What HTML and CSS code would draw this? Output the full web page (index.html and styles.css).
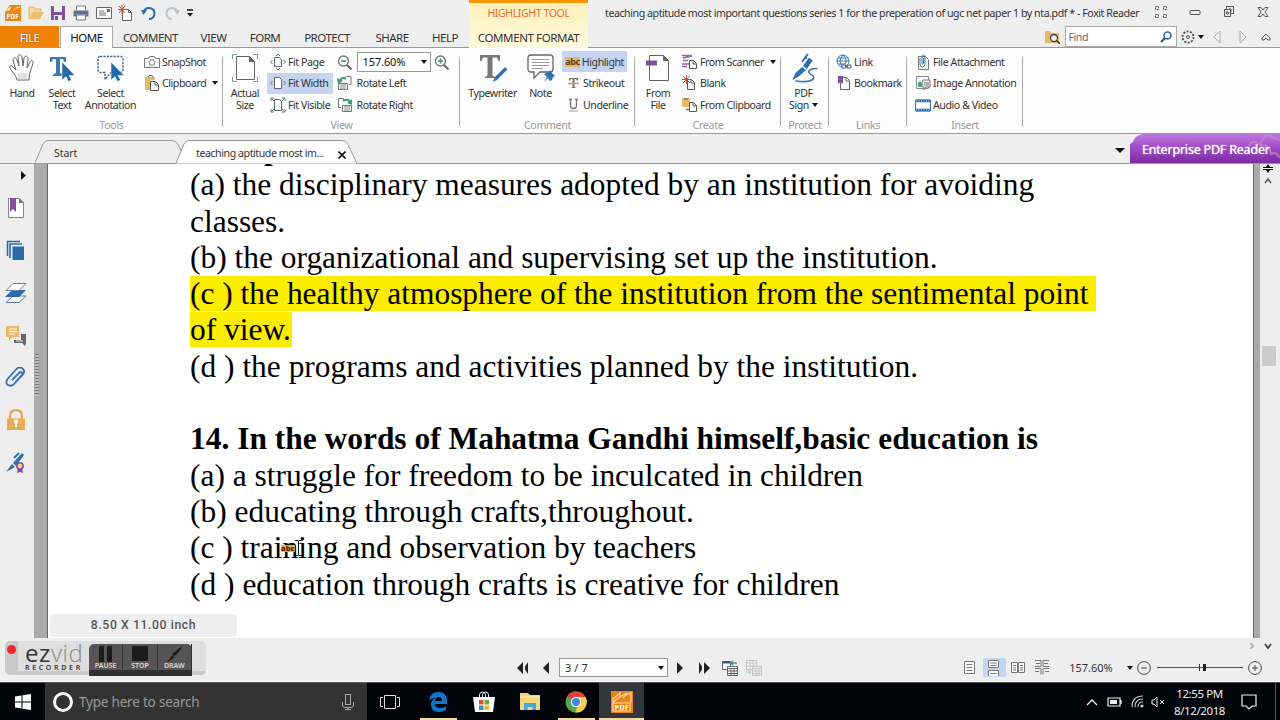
FILE: index.html
```
<!DOCTYPE html>
<html lang="en">
<head>
    <meta charset="UTF-8">
    <title>Foxit Reader</title>
    <link rel="stylesheet" href="styles.css">
</head>
<body>
<div class="screen">
    <header class="header">
        <div class="header-left">
            <div class="quick-bar">
                <svg width="16" height="16" viewBox="0 0 16 16"><path d="M5 0h11v16H0V7z" fill="#ef8413"/><path d="M1 6l5-5-1 4z" fill="#fff"/><path d="M8 6q2-4 7-4" stroke="#ffd9a8" fill="none"/><text x="1.500" y="13.500" font-size="6.500" class="logo-text">PDF</text></svg>
                <svg width="16" height="16" viewBox="0 0 16 16"><path d="M1 14V2h5l1 2h6v3" fill="#f3d5a0" stroke="#e5b566"/><path d="M1 14l4-7h11l-4 7z" fill="#edbd6d"/></svg>
                <svg width="16" height="16" viewBox="0 0 16 16"><path d="M1 1h14v14H1z" fill="#80509c"/><path d="M4 1h8v6H4zM4 10h8v5H4z" fill="#eee"/><path d="M5 11h3v4H5z" fill="#80509c"/></svg>
                <svg width="16" height="16" viewBox="0 0 16 16"><path d="M3.500 5V1h9v4M3.500 10v5h9v-5z" fill="#fff" stroke="#777"/><path d="M.5 5.500h15v6h-3v-2h-9v2h-3z" fill="#6c737b"/><path d="M3 8h10" stroke="#3c76b5" stroke-width="2"/></svg>
                <svg width="16" height="16" viewBox="0 0 16 16"><path d="M.5 2.500h15v11H.5z" fill="#fff" stroke="#666"/><path d="M3 6h5M3 8h7M3 10h7" stroke="#777"/><path d="M11 4h3v3h-3z" fill="#666"/></svg>
                <svg width="16" height="16" viewBox="0 0 16 16"><path d="M4.500 4.500h6l3 3v8h-9z" fill="#fff" stroke="#666"/><path d="M10.500 4.500v3h3" fill="none" stroke="#666"/><path d="M4 0v9M0 4.500h8M1 1l6 7M7 1L1 8" stroke="#d2482f"/></svg>
                <svg width="16" height="16" viewBox="0 0 16 16"><path d="M3 6a5.500 5.500 0 1 1 5 8" fill="none" stroke="#2d6eb0" stroke-width="2"/><path d="M0 5h6L2.500 10z" fill="#2d6eb0"/></svg>
                <svg width="16" height="16" viewBox="0 0 16 16"><path d="M13 6a5.500 5.500 0 1 0-5 8" fill="none" stroke="#b8c5d2" stroke-width="2"/><path d="M16 5h-6l3.500 5z" fill="#b8c5d2"/></svg>
                <svg width="6" height="8" viewBox="0 0 6 8"><path d="M0 1h6" stroke="#111" stroke-width="1.500"/><path d="M0 4h6L3 7.500z" fill="#111"/></svg>
            </div>
            <nav class="menu">
                <span class="file">FILE</span><span class="home">HOME</span><span class="m-comment">COMMENT</span><span class="m-view">VIEW</span><span class="m-form">FORM</span><span class="m-protect">PROTECT</span><span class="m-share">SHARE</span><span class="m-help">HELP</span>
            </nav>
        </div>
        <div class="context-tab">
            <span class="context-name">HIGHLIGHT TOOL</span>
            <span class="context-menu">COMMENT FORMAT</span>
        </div>
        <div class="header-right">
            <div class="title-row">
                <span class="doc-title">teaching aptitude most important questions series 1 for the preperation of ugc net paper 1 by nta.pdf * - Foxit Reader</span>
                <div class="window-buttons">
                    <svg width="14" height="14" viewBox="0 0 14 14" fill="none" stroke="#555"><path d="M1.500 1.500h3v3h-3zM9.500 1.500h3v3h-3zM1.500 9.500h3v3h-3zM9.500 9.500h3v3h-3z" stroke-dasharray="2 1"/></svg>
                    <svg width="14" height="14" viewBox="0 0 14 14" fill="none" stroke="#555"><rect x="2" y="5.500" width="10" height="4" rx="1"/></svg>
                    <svg width="14" height="14" viewBox="0 0 14 14" fill="none" stroke="#555"><path d="M4.500 4V1.500h7v7H9"/><path d="M2.500 4.500h6v7h-6zM4.500 7h2v2h-2zM7 4h2v3"/></svg>
                    <svg width="14" height="14" viewBox="0 0 14 14" fill="none" stroke="#555"><path d="M2 2.500h3l2 2.500 2-2.500h3L9 7l3 4.500H9L7 9l-2 2.500H2L5 7z"/></svg>
                </div>
            </div>
            <div class="find-row">
                <svg width="15" height="14" viewBox="0 0 15 14"><path d="M0 1h5l1 2h8v10H0z" fill="#e8b767"/><circle cx="9" cy="8" r="3.500" fill="#eee" stroke="#444" stroke-width="1.300"/><path d="M11.500 10.500L15 14" stroke="#444" stroke-width="1.600"/></svg>
                <div class="find-box"><span>Find</span><svg width="12" height="12" viewBox="0 0 12 12"><circle cx="7.500" cy="4.500" r="3.500" fill="#fff" stroke="#2a66b4" stroke-width="1.600"/><path d="M5 7L1 11" stroke="#2a5288" stroke-width="2.200"/></svg></div>
                <svg class="gear" width="14" height="14" viewBox="0 0 14 14" fill="none" stroke="#555"><circle cx="7" cy="7" r="5.500" stroke-width="2" stroke-dasharray="2 1.400"/><circle cx="7" cy="7" r="4" stroke="#eee"/><circle cx="7" cy="7" r="1.500"/></svg>
                <i class="caret"></i>
                <svg class="prev" width="8" height="14" viewBox="0 0 8 14"><path d="M7 1v12L1 7z" fill="#f6f6f6" stroke="#aaa"/></svg>
                <svg class="next" width="8" height="14" viewBox="0 0 8 14"><path d="M1 1v12l6-6z" fill="#f6f6f6" stroke="#aaa"/></svg>
                <svg class="collapse" width="10" height="8" viewBox="0 0 10 8"><path d="M1 5l4-4 4 4v2H7L5 5 3 7H1z" fill="none" stroke="#555"/></svg>
            </div>
        </div>
    </header>

    <section class="ribbon">
        <div class="group g-tools">
            <div class="tools">
                <div class="big hand">
                    <svg width="26" height="28" viewBox="0 0 26 28"><path d="M8 26C7 21 3 18 1 14c-1-2 1-3 3-1l3 3L4 6c0-3 3-3 4 0l2 6-1-9c0-3 3-3 4 0l1 9 1-8c1-3 4-2 4 1l-1 9 3-6c1-3 4-1 3 1-2 7-4 10-4 17z" fill="#fff" stroke="#666"/><path d="M8.500 19h10v6.500h-10z" fill="#ccc" opacity=".6"/></svg>
                    <span>Hand</span>
                </div>
                <div class="big select-text">
                    <svg width="26" height="28" viewBox="0 0 26 28"><path d="M1 3h16v5h-1.500L14 5h-3v14l3 1.500V22H4v-1.500L7 19V5H4L2.500 8H1z" fill="#387db8"/><path d="M13 8v18l4-3.500 2.500 5 3-1.500-2.500-4.500h6z" fill="#2568a8" stroke="#fff" stroke-width=".5"/></svg>
                    <span>Select<br>Text</span>
                </div>
                <div class="big select-anno">
                    <svg width="28" height="28" viewBox="0 0 28 28"><path d="M3 2.500h20q3 0 3 3v10q0 3-3 3H14l-6 7v-7H4q-3 0-3-3v-10q0-3 2-3z" fill="none" stroke="#48658a" stroke-width="1.400" stroke-dasharray="2.200 1.200"/><path d="M14 8v18l4-3.500 2.500 5 3-1.500-2.500-4.500h6z" fill="#2568a8" stroke="#fff" stroke-width=".5"/></svg>
                    <span>Select<br>Annotation</span>
                </div>
                <div class="rows snap">
                    <div><svg width="16" height="16" viewBox="0 0 16 16" fill="none" stroke="#777"><path d="M.5 4.500h4l1-2h5l1 2h4v9H.5z"/><circle cx="8" cy="8.500" r="2.800"/></svg>SnapShot</div>
                    <div><svg width="16" height="16" viewBox="0 0 16 16"><path d="M1 2h10v3H7v10H1z" fill="#e9b76a"/><path d="M4 2.500l1-2h3l1 2" stroke="#666" fill="none"/><path d="M6.500 6.500h5l3 3v6h-8zM11 7v3h3" fill="#fff" stroke="#555"/></svg>Clipboard<i class="caret"></i></div>
                </div>
            </div>
            <p>Tools</p>
        </div>
        <div class="group g-view">
            <div class="tools">
                <div class="big actual">
                    <svg width="28" height="30" viewBox="0 0 28 30"><path d="M5.500 3.500h13l5 5v18h-18z" fill="#fff" stroke="#666"/><path d="M18 3v6h6z" fill="#666"/><path d="M1.500 6V1.500H6M22 1.500h4.500V6M1.500 24v4.500H6M22 28.500h4.500V24" fill="none" stroke="#7c9a90"/></svg>
                    <span>Actual<br>Size</span>
                </div>
                <div class="rows fit">
                    <div><svg width="16" height="16" viewBox="0 0 16 16"><path d="M4.500 3.500h5l2 2v7h-7z" fill="#fff" stroke="#666"/><path d="M6 2l2-2 2 2M6 14l2 2 2-2M2.500 6l-2 2 2 2M13.500 6l2 2-2 2" fill="none" stroke="#4b8d73"/></svg>Fit Page</div>
                    <div class="on"><svg width="16" height="16" viewBox="0 0 16 16"><path d="M4.500 2.500h5l2 2v9h-7z" fill="#fff" stroke="#666"/><path d="M2.500 6l-2 2 2 2M13.500 6l2 2-2 2" fill="none" stroke="#4b8d73"/></svg>Fit Width</div>
                    <div><svg width="16" height="16" viewBox="0 0 16 16"><path d="M4.500 2.500h5l2 2v9h-7z" fill="#fff" stroke="#666"/><path d="M1 4V1h3M12 1h3v3M1 12v3h3M12 15h3v-3M1 1l3 3M15 1l-3 3M1 15l3-3M15 15l-3-3" fill="none" stroke="#4b8d73"/></svg>Fit Visible</div>
                </div>
                <div class="rows zoomcol">
                    <div><svg width="16" height="16" viewBox="0 0 16 16" fill="none"><circle cx="6.500" cy="7" r="5" stroke="#777" stroke-width="1.400"/><path d="M10 11l4.500 4.500" stroke="#666" stroke-width="2"/><path d="M4 7h5" stroke="#3a8d6e" stroke-width="1.500"/></svg><span class="zoom-box">157.60%<i class="caret"></i></span><svg width="16" height="16" viewBox="0 0 16 16" fill="none"><circle cx="6.500" cy="7" r="5" stroke="#777" stroke-width="1.400"/><path d="M10 11l4.500 4.500" stroke="#666" stroke-width="2"/><path d="M4 7h5M6.500 4.500v5" stroke="#3a8d6e" stroke-width="1.500"/></svg></div>
                    <div><svg width="16" height="16" viewBox="0 0 16 16" fill="none" stroke="#777"><path d="M9 1.500h5v8h-2M1.500 8.500h9v6h-9z"/><path d="M4 9v5M6 9v5M8 9v5" stroke="#888"/><path d="M9 4Q5 1 3 6" stroke="#3a9a76" stroke-width="2"/><path d="M0 3l1 6 5-3z" fill="#3a9a76" stroke="none"/></svg>Rotate Left</div>
                    <div><svg width="16" height="16" viewBox="0 0 16 16" fill="none" stroke="#777"><path d="M4 10.500H1.500v-9h5v2M5.500 8.500h9v6h-9z"/><path d="M8 9v5M10 9v5M12 9v5" stroke="#888"/><path d="M6 4q5-3 7 1" stroke="#3a9a76" stroke-width="2"/><path d="M15 2l0 6-5-2z" fill="#3a9a76" stroke="none"/></svg>Rotate Right</div>
                </div>
            </div>
            <p>View</p>
        </div>
        <div class="group g-comment">
            <div class="tools">
                <div class="big typewriter">
                    <svg width="30" height="30" viewBox="0 0 30 30"><path d="M2 2h20v6h-1.500L19 4.500h-4.500v18L17 24v1H7v-1l2.500-1.500v-18H5L3.500 8H2z" fill="#777"/><path d="M27 14l2.500 2.500L19 27l-4.500 2L17 24z" fill="#3572b0"/></svg>
                    <span>Typewriter</span>
                </div>
                <div class="big note">
                    <svg width="30" height="30" viewBox="0 0 30 30"><path d="M5 2h19q3 0 3 3v11q0 3-3 3H14l-6 6v-6H5q-3 0-3-3V5q0-3 3-3z" fill="#fff" stroke="#666" stroke-width="1.300"/><path d="M6 6.500h17M6 9.500h17M6 12.500h17M6 15.500h11" stroke="#999"/><path d="M23 17l6 6-2 1-1 3-2 1-2-3-4 4 3-5-3-3 2-1 3-1z" fill="#2f6faf"/></svg>
                    <span>Note</span>
                </div>
                <div class="rows marks">
                    <div class="on"><b class="abc">abc</b>Highlight</div>
                    <div><svg width="16" height="16" viewBox="0 0 16 16"><path d="M4 3h9v2.500h-1L11 4H9.500v8l1.500 1H6l1.500-1V4H6L5 5.500H4z" fill="#777"/><path d="M3 8.500h11" stroke="#d99748" stroke-width="1.500"/></svg>Strikeout</div>
                    <div><svg width="16" height="16" viewBox="0 0 16 16" fill="none" stroke="#777"><path d="M4 2.500h3M10 2.500h3M5.500 3v5.500q0 3 3 3t3-3V3" stroke-width="1.300"/><path d="M4 14h9" stroke="#b49575"/></svg>Underline</div>
                </div>
            </div>
            <p>Comment</p>
        </div>
        <div class="group g-create">
            <div class="tools">
                <div class="big from-file">
                    <svg width="26" height="30" viewBox="0 0 26 30"><path d="M4.500 2.500h14l5 5v20h-19z" fill="#fff" stroke="#666"/><path d="M18 2v6h6z" fill="#666"/><path d="M1 7.500h11v5H1z" fill="#80509c"/></svg>
                    <span>From<br>File</span>
                </div>
                <div class="rows sources">
                    <div><svg width="16" height="16" viewBox="0 0 16 16"><path d="M0 1.500h10M1 4l9-2M1 6.500h5M0 10h8M0 12.500h5" stroke="#8e67a5" stroke-width="1.300"/><path d="M7.500 6.500h4l3 3v5h-7zM11 7v3h3" fill="#fff" stroke="#555"/></svg>From Scanner<i class="caret"></i></div>
                    <div><svg width="16" height="16" viewBox="0 0 16 16"><path d="M5.500 4.500h4l3 3v7h-7zM9 5v3h3" fill="#fff" stroke="#555"/><path d="M4.500 0v9M0 4.500h9M1 1l7 7M8 1L1 8" stroke="#d2482f"/></svg>Blank</div>
                    <div><svg width="16" height="16" viewBox="0 0 16 16"><path d="M0 1h8v9H0z" fill="#e9b76a"/><path d="M2 2h4M4 12.500h4" stroke="#777" stroke-width="1.300"/><path d="M7.500 5.500h4l3 3v6h-7zM11 6v3h3" fill="#fff" stroke="#555"/></svg>From Clipboard</div>
                </div>
            </div>
            <p>Create</p>
        </div>
        <div class="group g-protect">
            <div class="tools">
                <div class="big sign">
                    <svg width="30" height="31" viewBox="0 0 30 31"><path d="M20 5l4 2.500-6 9-4-3zM13 14.500l4 3L10 24l-7 4 3-7z" fill="#2e6eae"/><path d="M13 9l6-8M17 5l1 1" stroke="#2e6eae" stroke-width="2"/><path d="M29 16q-10 0-9 4c1 3 6 2 5 6q-2 5-19 3" fill="none" stroke="#3d78b2" stroke-width="1.600"/></svg>
                    <span>PDF<br>Sign<i class="caret"></i></span>
                </div>
            </div>
            <p>Protect</p>
        </div>
        <div class="group g-links">
            <div class="tools">
                <div class="rows">
                    <div><svg width="16" height="16" viewBox="0 0 16 16" fill="none" stroke="#3d7ab5"><circle cx="7" cy="7" r="6"/><path d="M1 7h12M2 4h10M2 10h8M7 1q-6 6 0 12M7 1q5 5 2 9"/><path d="M6 11h4v3H6zM11 11h4v3h-4zM9 12.500h3" stroke="#42628a" fill="#fff"/></svg>Link</div>
                    <div><svg width="16" height="16" viewBox="0 0 16 16"><path d="M4.500 2.500h6l3 3v9h-9zM10 3v3h3" fill="#fff" stroke="#666"/><path d="M2 1h5v8L4.500 7 2 9z" fill="#80509c"/></svg>Bookmark</div>
                </div>
            </div>
            <p>Links</p>
        </div>
        <div class="group g-insert">
            <div class="tools">
                <div class="rows">
                    <div><svg width="16" height="16" viewBox="0 0 16 16" fill="none"><path d="M3.500 2.500h7l3 3v10h-10z" stroke="#777" fill="#fff"/><path d="M5 4v6q0 3 2.500 3T10 10V3q0-2-1.500-2T7 3v6q0 1 .7 1T8.500 9V4" stroke="#3a78b5"/></svg>File Attachment</div>
                    <div><svg width="16" height="16" viewBox="0 0 16 16" fill="none"><path d="M1.500 1.500h12v12h-12z" stroke="#888"/><path d="M3 12V8l2-2 2 3v3z" fill="#49a37f"/><path d="M8 5h7v7h-4l-2 3v-3H7V7z" fill="#eee" stroke="#777"/><path d="M9 8h5M9 10h5" stroke="#777"/></svg>Image Annotation</div>
                    <div><svg width="16" height="16" viewBox="0 0 16 16"><path d="M.5 3h15v11H.5z" fill="#fff" stroke="#2d6eaf"/><path d="M1 4h14M1 13h14" stroke="#1e61a6" stroke-width="2.400"/><path d="M1 4h14M1 13h14" stroke="#fff" stroke-dasharray="1 1.500"/></svg>Audio &amp; Video</div>
                </div>
            </div>
            <p>Insert</p>
        </div>
    </section>

    <div class="tab-strip">
        <div class="doc-tab start-tab">
            <svg width="148" height="23" viewBox="0 0 148 23"><path d="M0 22.500L8 4q2-3.500 5-3.500h124q4 0 6 4l5 10" fill="#eee" stroke="#999"/></svg>
            <span>Start</span>
        </div>
        <div class="doc-tab open-tab">
            <svg width="182" height="24" viewBox="0 0 182 24"><path d="M0 23.500L8 4q2-3.500 5-3.500h153q4 0 6 4l9 19" fill="#fff" stroke="#999"/></svg>
            <span>teaching aptitude most im...</span>
            <svg class="close" width="8" height="8" viewBox="0 0 8 8"><path d="M.5.5l7 7M7.500.5l-7 7" stroke="#111" stroke-width="1.600"/></svg>
        </div>
        <i class="caret tab-caret"></i>
        <div class="banner">
            <svg width="150" height="29" viewBox="0 0 150 29"><path d="M0 0h13Q5 1 3 8L0 10z" fill="#f4eef8"/><path d="M118 13q5-9 12-2 4-12 12-8l8 3M130 12q9-3 11 8 5-3 9 4" fill="none" stroke="#c98ac4" stroke-width="2.500" opacity=".6"/></svg>
            <span>Enterprise PDF Reader</span>
        </div>
    </div>

    <main class="workspace">
        <aside class="sidebar">
            <svg class="expand" width="5" height="9" viewBox="0 0 5 9"><path d="M0 0l5 4.500L0 9z" fill="#111"/></svg>
            <svg width="22" height="22" viewBox="0 0 22 22"><path d="M3.500 1.500h11l4 4v15h-15z" fill="#fff" stroke="#888"/><path d="M14 1v5h5z" fill="#777"/><path d="M5 1h6v14l-3-3-3 3z" fill="#80509c"/></svg>
            <svg width="22" height="22" viewBox="0 0 22 22"><path d="M2.500 16V1.500H15M5 18V4h12" fill="none" stroke="#2b69ab" stroke-width="1.600"/><path d="M7.500 6.500H19V20H7.500z" fill="#2b69ab"/></svg>
            <svg width="22" height="22" viewBox="0 0 22 22"><path d="M8 14h13l-7 6.500H1z" fill="#fff" stroke="#6282a3"/><path d="M7 8h14l-7 7H0z" fill="#2b69ab"/><path d="M8 1.500h13l-7 7H1z" fill="#fff" stroke="#6282a3"/></svg>
            <svg width="22" height="22" viewBox="0 0 22 22"><path d="M1 1h13v11H8l-4 4v-4H1z" fill="#e8b767"/><path d="M4 4h8M4 6.500h8M4 9h6" stroke="#fff"/><path d="M16 9h5v9l-1 3-3-3H9v-3h7z" fill="#666"/><path d="M11 16h7" stroke="#eee"/></svg>
            <svg width="22" height="22" viewBox="0 0 22 22"><path d="M7 13l7-7q2-2 3 0t-1 3l-7 8q-3 3-6 1t-.5-6l9-10q3-3 6-.5t.5 6L10 16" fill="none" stroke="#3673b1" stroke-width="1.800"/></svg>
            <svg width="22" height="22" viewBox="0 0 22 22"><path d="M5 10V7q0-6 6-6t6 6v3" fill="none" stroke="#e7ad53" stroke-width="2.300"/><path d="M2 9.500h18V21H2z" fill="#e8ad50"/><path d="M10 18v-3.500a2 2 0 1 1 2 0V18z" fill="#fff"/></svg>
            <svg width="22" height="22" viewBox="0 0 22 22"><path d="M17 1l2 2-8 11-3-3zM7 12l3 3-9 5z" fill="#2e6eae"/><path d="M9 6l5-5" stroke="#2e6eae" stroke-width="1.800"/><path d="M13 15l-1 6 3-1 3 1-1-6z" fill="#80509c"/><circle cx="15" cy="14" r="3.200" fill="#f5cd83" stroke="#80509c" stroke-width="1.500"/></svg>
        </aside>
        <div class="gutter"><i class="grip"></i></div>
        <article class="page">
            <p class="cut"><b>Group</b></p>
            <p>(a) the disciplinary measures adopted by an institution for avoiding</p>
            <p>classes.</p>
            <p>(b) the organizational and supervising set up the institution.</p>
            <p><mark>(c ) the healthy atmosphere of the institution from the sentimental point</mark></p>
            <p><mark class="short">of view.</mark></p>
            <p>(d ) the programs and activities planned by the institution.</p>
            <p>&nbsp;</p>
            <p><b>14. In the words of Mahatma Gandhi himself,basic education is</b></p>
            <p>(a) a struggle for freedom to be inculcated in children</p>
            <p>(b) educating through crafts,throughout.</p>
            <p>(c ) training and observation by teachers</p>
            <p>(d ) education through crafts is creative for children</p>
            <div class="cursor"><b>abc</b><svg width="7" height="16" viewBox="0 0 7 16"><path d="M0 .5h3l.5.5.5-.5h3M3.500 1v14M0 15.500h3l.5-.5.5.5h3" fill="none" stroke="#111"/></svg></div>
            <div class="page-size">8.50 X 11.00 inch</div>
        </article>
        <div class="edge"></div>
        <div class="scrollbar">
            <svg width="12" height="20" viewBox="0 0 12 20"><path d="M1 3.500h10M1 5.500h10" stroke="#111"/><path d="M6 0l2 3H4zM6 9L4 6h4z" fill="#111"/><path d="M3 19l3-4 3 4" fill="none" stroke="#555" stroke-width="1.500"/></svg>
            <div class="thumb"></div>
        </div>
    </main>

    <div class="h-scroll">
        <svg width="6" height="8" viewBox="0 0 6 8"><path d="M1 1l3.500 3L1 7" fill="none" stroke="#aaa" stroke-width="1.600"/></svg>
        <svg width="8" height="8" viewBox="0 0 8 8"><path d="M1 2l3 4 3-4" fill="none" stroke="#444" stroke-width="1.800"/></svg>
    </div>
    <footer class="status">
        <div class="pager">
            <svg width="12" height="12" viewBox="0 0 12 12"><path d="M7 0v12L1 6zM12 0v12L8 6z" fill="#222"/><path d="M8.500 0v12" stroke="#eee"/></svg>
            <svg width="6" height="12" viewBox="0 0 6 12"><path d="M6 0v12L0 6z" fill="#222"/></svg>
            <span class="page-box">3 / 7<i class="caret"></i></span>
            <svg width="6" height="12" viewBox="0 0 6 12"><path d="M0 0v12l6-6z" fill="#222"/></svg>
            <svg width="12" height="12" viewBox="0 0 12 12"><path d="M5 0v12l6-6zM0 0v12l4-6z" fill="#222"/><path d="M3.500 0v12" stroke="#eee"/></svg>
            <svg width="16" height="16" viewBox="0 0 16 16" fill="#fff" stroke="#666"><path d="M.5 1.500h8v8h-8z"/><path d="M1 2.500h7" stroke="#2d5588" stroke-width="2"/><path d="M5.500 6.500h10v9h-10zM6 8.500h9M6 11h9M6 13.500h9M9 8v7M12 8v7"/><path d="M15 3H9M11 1L9 3l2 2" stroke="#3a9a76" fill="none" stroke-width="1.500"/></svg>
            <svg class="faded" width="16" height="16" viewBox="0 0 16 16" fill="#fff" stroke="#888"><path d="M.5.500h10v9H.5zM1 3h9M1 6h9M4 1v8M7 1v8"/><path d="M6.500 6.500h9v9h-9zM7 8.500h8M7 11h8M7 13.500h8M10 8v7M13 8v7"/><path d="M0 12h5M3 10l2 2-2 2" stroke="#3a9a76" fill="none"/></svg>
        </div>
        <div class="views">
            <span><svg width="16" height="18" viewBox="0 0 16 18" fill="#fff" stroke="#777"><path d="M3.500 3.500h10v12h-10zM5.500 6.500h6M5.500 9.500h6M5.500 12.500h6"/></svg></span>
            <span class="on"><svg width="16" height="18" viewBox="0 0 16 18" fill="#fff" stroke="#777"><path d="M3.500 2.500h10v7h-10zM5.500 5h6M5.500 7.500h6M3.500 18v-5.500h10V18M5.500 15.500h6"/></svg></span>
            <span><svg width="16" height="18" viewBox="0 0 16 18" fill="#fff" stroke="#777"><path d="M1.500 4.500h6v10h-6zM8.500 4.500h6v10h-6zM3 7.500h3M3 10h3M3 12h3M10 7.500h3M10 10h3M10 12h3"/></svg></span>
            <span><svg width="16" height="18" viewBox="0 0 16 18" fill="none" stroke="#777"><path d="M1 2.500h6v6H1M15 2.500H9v6h6M1 10.500h6v6M15 10.500H9v6M2 5.500h4M10 5.500h4M1 13.500h4M11 13.500h4"/></svg></span>
        </div>
        <span class="zoom-value">157.60%</span>
        <i class="caret"></i>
        <svg class="minus" width="14" height="14" viewBox="0 0 14 14" fill="none" stroke="#444"><circle cx="7" cy="7" r="6.400"/><path d="M4 7h6"/></svg>
        <div class="slider"><i></i></div>
        <svg width="14" height="14" viewBox="0 0 14 14" fill="none" stroke="#444"><circle cx="7" cy="7" r="6.400"/><path d="M4 7h6M7 4v6"/></svg>
    </footer>

    <div class="recorder">
        <div class="rec-handle"><i></i></div>
        <div class="rec-logo"><span class="ez">ez<em>vid</em></span><span class="rec-word">RECORDER</span></div>
        <div class="rec-buttons">
            <div><svg width="16" height="16" viewBox="0 0 16 16"><path d="M1 0h5v16H1zM9 0h5v16H9z" fill="#1c1c1c"/></svg>PAUSE</div>
            <div><svg width="16" height="16" viewBox="0 0 16 16"><path d="M0 0h16v15H0z" fill="#1c1c1c"/></svg>STOP</div>
            <div><svg width="16" height="16" viewBox="0 0 16 16"><path d="M16 0q-3 8-8 10L6 8zM6 9l2 2q-2 4-8 5 4-2 6-7z" fill="#1c1c1c"/></svg>DRAW</div>
        </div>
    </div>

    <div class="taskbar">
        <div class="start"><svg width="16" height="16" viewBox="0 0 16 16"><path d="M0 2.500l6.500-1v6H0zM7.500 1.300L16 0v7.500H7.500zM0 8.500h6.500v6l-6.500-1zM7.500 8.500H16V16l-8.500-1.300z" fill="#fff"/></svg></div>
        <div class="search">
            <i class="ring"></i><span>Type here to search</span>
            <svg width="12" height="16" viewBox="0 0 12 16" fill="none" stroke="#aaa"><rect x="3.500" y=".5" width="5" height="10"/><path d="M.5 8v3q0 2.500 2.500 2.500h6q2.500 0 2.500-2.500V8M6 13.500v2M3 15.500h6"/></svg>
        </div>
        <div class="apps">
            <div class="task-view"><svg width="20" height="16" viewBox="0 0 20 16" fill="none" stroke="#ddd"><path d="M4.500 1.500h11v13h-11zM3 3.500H.5v9H3M17 3.500h2.500v9H17"/></svg></div>
            <div class="running"><svg width="20" height="20" viewBox="0 0 20 20"><path d="M1 9Q2 0 10.500 0 19 0 19 9v3H7q0 4 5 4 3.500 0 6-1.500V18q-3 2-7 2-8 0-8-8 0-4 5-6Q3 6 1 9zm6 0h7q0-4-3-4T7 9z" fill="#1075cf" fill-rule="evenodd"/></svg></div>
            <div><svg width="22" height="22" viewBox="0 0 22 22"><path d="M6.500 7V4q0-3 3-3t3 3v3M9.500 7V4q0-3 3-3t3 3v3" fill="none" stroke="#eee"/><path d="M0 6h22l-2 15H2z" fill="#fff"/><path d="M6 9h4.500v4.500H6z" fill="#dd5130"/><path d="M11.500 9H16v4.500h-4.500z" fill="#6eaa38"/><path d="M6 14.500h4.500V19H6z" fill="#2d90c8"/><path d="M11.500 14.500H16V19h-4.500z" fill="#efb323"/></svg></div>
            <div><svg width="20" height="18" viewBox="0 0 20 18"><path d="M0 0h8l2 2h10v15H0z" fill="#f3d77e"/><path d="M0 4h20" stroke="#fff0b0"/><path d="M4 17v-7h12v7h-3.500v-3h-5v3z" fill="#42a6d7"/></svg></div>
            <div class="running"><svg width="22" height="22" viewBox="0 0 22 22"><circle cx="11" cy="11" r="10.500" fill="#53a850"/><path d="M11 11L2 5.500A10.500 10.500 0 0 1 20.500 6z" fill="#da4538"/><path d="M11 11l3 2-4 8.500A10.500 10.500 0 0 0 20.500 6H11z" fill="#f6cf45"/><circle cx="11" cy="11" r="5.200" fill="#fff"/><circle cx="11" cy="11" r="4" fill="#4986e8"/></svg></div>
            <div class="running active"><svg width="22" height="22" viewBox="0 0 22 22"><path d="M0 0h22v22H0z" fill="#ee8213"/><path d="M2 11V8l7-6v4zM9 6l7-4M12 7q3-4 8-5v9M2 12h17v8H2z" fill="none" stroke="#ffe0b8" stroke-width="1.100"/><text x="3.500" y="19" font-size="7.500" class="logo-text">PDF</text></svg></div>
        </div>
        <div class="tray">
            <svg width="12" height="8" viewBox="0 0 12 8"><path d="M1 7l5-5 5 5" fill="none" stroke="#eee" stroke-width="1.300"/></svg>
            <svg width="15" height="10" viewBox="0 0 15 10"><path d="M1 1h12v8H1zM14 3v4" fill="none" stroke="#eee" stroke-width="1.200"/><path d="M3 3h7v4H3z" fill="#eee"/></svg>
            <svg class="wifi" width="13" height="13" viewBox="0 0 13 13" fill="none" stroke="#ccc" stroke-width="1.200"><path d="M1 12Q1 1 12 1M4 12q0-8 8-8M7 12q0-5 5-5"/><circle cx="11" cy="11" r="1" fill="#eee"/></svg>
            <svg width="14" height="12" viewBox="0 0 14 12" fill="none" stroke="#eee"><path d="M1 4h2l3-3v10L3 8H1zM9 4l4 4M13 4L9 8"/></svg>
            <div class="clock">12:55 PM<br>8/12/2018</div>
            <svg class="notice" width="16" height="16" viewBox="0 0 16 16"><path d="M1 1h14v11h-4l-3 3-3-3H1z" fill="none" stroke="#eee" stroke-width="1.200"/></svg>
        </div>
    </div>
</div>
</body>
</html>
```
FILE: styles.css
```
* {
    box-sizing: border-box;
}
body {
    margin: 0;
    font-family: "Noto Sans", "Open Sans", sans-serif;
    font-size: 10.6px;
    letter-spacing: -0.43px;
    color: #333;
}
p {
    margin: 0;
}
svg {
    display: block;
    flex: none;
}
.screen {
    position: relative;
    width: 1280px;
    height: 720px;
    overflow: hidden;
    background: #eee;
    display: flex;
    flex-direction: column;
    white-space: nowrap;
}
.caret {
    flex: none;
    border: 3px solid transparent;
    border-top: 4px solid #111;
    border-bottom: 0;
}
.logo-text {
    fill: #fff;
    font-weight: bold;
    letter-spacing: 0;
}

/* title bar and menu */
.header {
    height: 48px;
    flex: none;
    display: grid;
    grid-template-columns: 469px 119px 1fr;
    border-bottom: 1px solid #999;
}
.quick-bar {
    height: 26px;
    display: flex;
    align-items: center;
    gap: 6.7px;
    padding-left: 5px;
}
.menu {
    height: 21px;
    display: flex;
    line-height: 24px;
    font-size: 11.5px;
    text-align: center;
    letter-spacing: -0.5px;
}
.file { width: 59px; background: #ee8207; color: #fff; text-shadow: 0 0 2px #7a4000; font-size: 11px; margin-right: 1px; }
.home { width: 53px; height: 22px; background: #fcfcfc; border: 1px solid #aaa; border-bottom: 0; line-height: 22px; color: #111; }
.m-comment { width: 75px; }
.m-view { width: 51px; }
.m-form { width: 52px; }
.m-protect { width: 72px; }
.m-share { width: 58px; }
.m-help { width: 48px; }
.context-tab {
    background: linear-gradient(#fff0b8, #fffbe0);
    border-top: 3px solid #f79400;
    display: flex;
    flex-direction: column;
    text-align: center;
}
.context-name {
    height: 23px;
    line-height: 21px;
    color: #ef6b2e;
}
.context-menu {
    font-size: 11.5px;
    line-height: 24px;
    letter-spacing: -0.4px;
}
.title-row {
    height: 26px;
    display: flex;
    align-items: center;
    padding-left: 17px;
}
.doc-title {
    flex: none;
    width: 549px;
}
.window-buttons {
    display: flex;
    gap: 20px;
    margin-top: -3px;
}
.find-row {
    height: 21px;
    display: flex;
    align-items: center;
    padding-left: 457px;
}
.find-box {
    width: 112px;
    height: 21px;
    margin: 0 4px 0 4.5px;
    padding: 0 4px 0 3px;
    background: #fff;
    border: 1px solid #aaa;
    display: flex;
    align-items: center;
    justify-content: space-between;
    color: #666;
}
.find-row .caret { margin-left: 3.5px; }
.prev { margin-left: 9px; }
.next { margin-left: 18px; }
.collapse { margin-left: 14px; }

/* ribbon */
.ribbon {
    height: 86px;
    flex: none;
    background: #fcfcfc;
    border-bottom: 1px solid #999;
    display: flex;
}
.group {
    position: relative;
    display: flex;
    flex-direction: column;
}
.group::after {
    content: "";
    position: absolute;
    right: 0;
    top: 9px;
    width: 1px;
    height: 69px;
    background: #aaa;
}
.group p {
    text-align: center;
    color: #999;
    line-height: 15px;
    letter-spacing: -0.3px;
}
.tools {
    height: 70px;
    display: flex;
    padding-top: 3px;
}
.g-tools { width: 223px; }
.g-view { width: 237px; }
.g-comment { width: 175px; }
.g-create { width: 146px; }
.g-protect { width: 48px; }
.g-links { width: 78px; }
.g-insert { width: 116px; }
.big {
    flex: none;
    display: flex;
    flex-direction: column;
    align-items: center;
    text-align: center;
    line-height: 12.3px;
}
.big svg {
    height: 30px;
    margin: 2px 0 4px;
}
.big .caret {
    display: inline-block;
    vertical-align: middle;
    margin: -3px 0 0 3px;
}
.hand { width: 44px; }
.select-text { width: 36px; }
.select-anno { width: 61px; }
.actual { width: 44px; }
.typewriter { width: 65px; }
.note { width: 31px; }
.from-file { width: 46px; }
.sign { width: 45px; }
.rows {
    display: flex;
    flex-direction: column;
    gap: 0.5px;
}
.rows div {
    height: 21px;
    display: flex;
    align-items: center;
    padding: 0 3px;
    gap: 2px;
}
.rows .on {
    background: #c4d4f1;
}
.rows .caret { margin-left: 4px; }
.fit { width: 66px; }
.zoomcol { margin-left: 4px; }
.zoomcol div { padding: 0; gap: 3.5px; }
.zoom-box {
    width: 74px;
    height: 20px;
    background: #fff;
    border: 1px solid #999;
    padding: 0 3px 0 5px;
    display: flex;
    align-items: center;
    justify-content: space-between;
    font-size: 11px;
    letter-spacing: -0.1px;
    color: #111;
}
.marks { margin-left: 6px; width: 65px; }
.abc {
    width: 16px;
    background: #eab65d;
    color: #57441f;
    font-size: 9px;
    line-height: 10px;
    letter-spacing: -0.4px;
    text-align: center;
}
.sources { margin-left: -2px; }
.g-links .rows { margin-left: 4px; }
.g-insert .rows { margin-left: 5px; }

/* document tabs */
.tab-strip {
    position: relative;
    height: 30px;
    flex: none;
    border-bottom: 1px solid #999;
    display: flex;
    padding: 6px 0 0 35px;
}
.doc-tab {
    position: relative;
    height: 23px;
    line-height: 26px;
}
.doc-tab svg:first-child {
    position: absolute;
    left: 0;
    top: 0;
}
.doc-tab span { position: relative; }
.start-tab { width: 141px; padding-left: 19px; letter-spacing: -0.1px; }
.open-tab { width: 182px; padding-left: 20px; display: flex; height: 24px; }
.open-tab .close { position: relative; margin: 11px 12px 0 auto; }
.tab-caret {
    border-width: 5px;
    border-top-width: 5px;
    margin: 8px 5px 0 auto;
}
.banner {
    position: relative;
    width: 150px;
    height: 29px;
    margin-top: -6px;
    background: linear-gradient(#bd78df, #a04cc9 45%, #7a2ca0);
    color: #fff;
    font-size: 12.5px;
    letter-spacing: -0.2px;
    line-height: 31px;
    padding-left: 12px;
    text-shadow: 0 0 1px #fff;
}
.banner svg { position: absolute; left: 0; top: 0; }
.banner span { position: relative; }

/* workspace */
.workspace {
    height: 474px;
    flex: none;
    display: flex;
}
.sidebar {
    width: 34px;
    padding-left: 5px;
    display: flex;
    flex-direction: column;
    gap: 20.4px;
}
.expand { margin: 7px 0 -3px 16px; }
.gutter {
    width: 14px;
    background: #aaa;
    border-right: 1px solid #666;
    display: flex;
    align-items: center;
}
.grip {
    width: 4px;
    height: 42px;
    margin: -52px 0 0 1px;
    background: repeating-linear-gradient(#777 0 1px, #bbb 1px 3px);
}
.page {
    position: relative;
    width: 1205px;
    background: #fff;
    overflow: hidden;
    padding-left: 142px;
    font-family: "Liberation Serif", serif;
    font-size: 31.45px;
    line-height: 36.3px;
    letter-spacing: 0;
    color: #000;
}
.page p { height: 36.3px; }
.page .cut { margin: -33px 0 0 3px; }
mark {
    background: #fbec00;
    color: #000;
    display: inline-block;
    height: 35px;
    line-height: 35px;
    padding-right: 8px;
}
.short { padding-right: 1px; }
.cursor {
    position: absolute;
    left: 233px;
    top: 376px;
    display: flex;
    align-items: center;
    gap: 0;
    font: bold 7.5px/7px "Noto Sans", sans-serif;
}
.cursor b {
    color: #4b2b00;
    background: #eda94b;
}
.page-size {
    position: absolute;
    left: 2px;
    top: 450px;
    width: 187px;
    height: 23px;
    background: #eee;
    border-radius: 4px;
    text-align: center;
    font: 500 12.2px/23px Roboto, sans-serif;
    letter-spacing: 0.6px;
    color: #555;
}
.edge {
    width: 7px;
    background: #aaa;
    border-left: 1px solid #666;
}
.scrollbar {
    width: 20px;
    padding-left: 2px;
}
.thumb {
    width: 14px;
    height: 20px;
    margin-top: 162px;
    background: #ccc;
}
.h-scroll {
    height: 16px;
    flex: none;
    display: flex;
    align-items: center;
    justify-content: flex-end;
    gap: 9px;
    padding-right: 8px;
}

/* status bar */
.status {
    height: 28px;
    flex: none;
    display: flex;
    align-items: center;
    padding-left: 516px;
    border-bottom: 1px solid #fff;
    font-size: 11px;
    letter-spacing: 0;
}
.pager {
    display: flex;
    align-items: center;
    width: 443px;
}
.pager svg:nth-child(2) { margin: 0 10px 0 15px; }
.page-box {
    width: 109px;
    height: 19px;
    border: 1px solid #999;
    background: #fff;
    display: flex;
    align-items: center;
    justify-content: space-between;
    padding: 0 3px 0 5px;
    letter-spacing: 0.1px;
}
.pager svg:nth-child(4) { margin: 0 16px 0 9px; }
.pager svg:nth-child(6) { margin: 0 8px 0 11px; }
.faded { opacity: 0.4; }
.views { display: flex; gap: 2px; }
.views span { width: 22.3px; height: 19px; padding-left: 2px; }
.views .on { background: #c4d4f1; }
.zoom-value { width: 42px; margin: 0 16px 0 15px; }
.minus { margin-left: 4px; }
.slider {
    width: 86px;
    height: 1.5px;
    margin: 0 5px 0 6px;
    background: #555;
}
.slider i {
    display: block;
    width: 7px;
    height: 7px;
    margin: -3px 0 0 42px;
    border-left: 1px solid #333;
    background: linear-gradient(90deg, transparent 3px, #222 3px);
}

/* recorder overlay */
.recorder {
    position: absolute;
    left: 5px;
    top: 641px;
    width: 201px;
    height: 34px;
    border-radius: 5px;
    background: #dedede;
    border-bottom: 4px solid #c9c9c9;
    display: flex;
    letter-spacing: 0;
}
.rec-handle { width: 13px; background: #c9c9c9; border-radius: 5px 0 0 0; }
.rec-handle i { display: block; width: 9px; height: 9px; margin: 4px 0 0 2px; border-radius: 50%; background: #f4262b; }
.rec-logo { width: 71px; flex: none; padding-left: 7px; color: #333; display: flex; flex-direction: column; }
.ez { font: 24px/22px "Open Sans", sans-serif; letter-spacing: 0.6px; padding-top: 1px; }
.ez em { font-style: normal; font-weight: 300; color: #888; }
.rec-word { font-size: 7px; line-height: 7px; letter-spacing: 2.7px; font-weight: 600; }
.rec-buttons {
    height: 32px;
    margin-top: 3px;
    width: 103px;
    flex: none;
    display: flex;
    background: linear-gradient(#555 26px, #303030 26px);
    border-radius: 5px 5px 0 0;
}
.rec-buttons div {
    flex: 1;
    display: flex;
    flex-direction: column;
    align-items: center;
    padding-top: 2px;
    font-size: 7px;
    line-height: 8px;
    font-weight: 600;
    color: #ddd;
    border-right: 1px solid #333;
}

/* taskbar */
.taskbar {
    flex: 1;
    background: #01030b;
    border-top: 1px solid #555;
    display: flex;
    color: #eee;
}
.start {
    width: 45px;
    display: flex;
    align-items: center;
    justify-content: center;
}
.search {
    width: 322px;
    background: #333;
    display: flex;
    align-items: center;
    padding: 0 13px 0 8px;
    font-size: 13.5px;
    letter-spacing: -0.2px;
    color: #999;
}
.search svg { margin-left: auto; }
.ring {
    width: 20px;
    height: 20px;
    border: 3px solid #fff;
    border-radius: 50%;
    margin-right: 6px;
}
.apps { display: flex; }
.apps div {
    width: 46px;
    display: flex;
    align-items: center;
    justify-content: center;
}
.apps .task-view {
    width: 48px;
    padding-right: 3px;
}
.apps .running {
    background: linear-gradient(#f4dc96, #f4dc96) center bottom / 37px 2px no-repeat;
}
.apps .active {
    width: 45px;
    background-color: #33363c;
    background-size: 45px 2px;
}
.tray {
    margin-left: auto;
    margin-right: 4px;
    padding-right: 18px;
    border-right: 1px solid #555;
    display: flex;
    align-items: center;
    gap: 9px;
}
.wifi { margin-right: -2px; }
.clock {
    text-align: center;
    font-size: 11.5px;
    line-height: 17px;
    letter-spacing: -0.4px;
    width: 51px;
}
.notice { margin-left: 7px; }
```
